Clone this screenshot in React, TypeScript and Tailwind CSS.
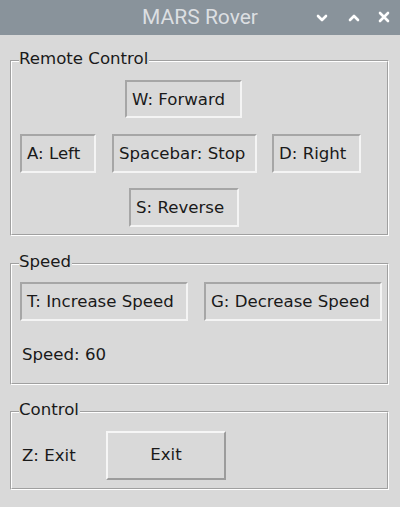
import React from "react";

const font = { fontFamily: '"DejaVu Sans", sans-serif' };

function Sunken({ w, h, ml, children }: { w: number; h: number; ml: number; children: React.ReactNode }) {
  return (
    <div
      className="flex items-center pl-[5px] border-2 border-t-[#a6a6a6] border-l-[#a6a6a6] border-b-[#f4f4f4] border-r-[#f4f4f4] text-[16.6px] text-[#1a1a1a] leading-[19px] whitespace-nowrap shrink-0"
      style={{ width: w, height: h, marginLeft: ml }}
    >
      {children}
    </div>
  );
}

function Frame({ label, h, mt, children }: { label: string; h: number; mt: number; children: React.ReactNode }) {
  return (
    <div
      className="relative border border-t-[#a0a0a0] border-l-[#a0a0a0] border-b-white border-r-white"
      style={{ height: h, marginTop: mt }}
    >
      <div className="absolute top-[-12px] left-[8px] bg-[#d9d9d9] pr-[1px] text-[16.6px] leading-[19px] text-[#1a1a1a] whitespace-nowrap z-10">
        {label}
      </div>
      <div className="h-full border border-t-white border-l-white border-b-[#a0a0a0] border-r-[#a0a0a0] flex flex-col">
        {children}
      </div>
    </div>
  );
}

export default function App() {
  return (
    <div className="w-[400px] h-[507px] bg-[#d9d9d9] flex flex-col overflow-hidden" style={font}>
      <div className="h-[35px] bg-[#89939b] relative flex items-center justify-center shrink-0">
        <span className="text-[21px] text-[#dcdfe2]" style={{ fontFamily: 'Roboto, "Open Sans", sans-serif' }}>
          MARS Rover
        </span>
        <div className="absolute right-0 top-0 h-[35px] flex items-center">
          <svg width="12" height="10" viewBox="0 0 12 10" className="absolute left-[-84px] top-[13px]">
            <path d="M2 3 L6 7 L10 3" stroke="#ffffff" strokeWidth="2.6" fill="none" strokeLinecap="round" strokeLinejoin="round" />
          </svg>
          <svg width="12" height="10" viewBox="0 0 12 10" className="absolute left-[-52px] top-[13px]">
            <path d="M2 7 L6 3 L10 7" stroke="#ffffff" strokeWidth="2.6" fill="none" strokeLinecap="round" strokeLinejoin="round" />
          </svg>
          <svg width="12" height="12" viewBox="0 0 12 12" className="absolute left-[-22px] top-[11px]">
            <path d="M2 2 L10 10 M10 2 L2 10" stroke="#ffffff" strokeWidth="2.6" fill="none" strokeLinecap="round" />
          </svg>
        </div>
      </div>

      <div className="pl-[10px] pr-[11px] flex flex-col">
        <Frame label="Remote Control" h={176} mt={25}>
          <div className="flex mt-[18px]">
            <Sunken w={117} h={38} ml={113}>W: Forward</Sunken>
          </div>
          <div className="flex mt-[16px]">
            <Sunken w={76} h={39} ml={8}>A: Left</Sunken>
            <Sunken w={145} h={39} ml={16}>Spacebar: Stop</Sunken>
            <Sunken w={89} h={39} ml={15}>D: Right</Sunken>
          </div>
          <div className="flex mt-[15px]">
            <Sunken w={110} h={39} ml={117}>S: Reverse</Sunken>
          </div>
        </Frame>

        <Frame label="Speed" h={122} mt={27}>
          <div className="flex mt-[17px]">
            <Sunken w={168} h={39} ml={8}>T: Increase Speed</Sunken>
            <Sunken w={178} h={39} ml={16}>G: Decrease Speed</Sunken>
          </div>
          <div className="ml-[10px] mt-[24px] text-[16.6px] leading-[19px] text-[#1a1a1a]">Speed: 60</div>
        </Frame>

        <Frame label="Control" h={79} mt={26}>
          <div className="flex items-center mt-[18px]">
            <div className="ml-[10px] w-[84px] text-[16.6px] leading-[19px] text-[#1a1a1a]">Z: Exit</div>
            <div className="w-[120px] h-[49px] flex items-center justify-center border-2 border-t-[#f6f6f6] border-l-[#f6f6f6] border-b-[#9c9c9c] border-r-[#9c9c9c] text-[16.6px] text-[#1a1a1a]">
              Exit
            </div>
          </div>
        </Frame>
      </div>
    </div>
  );
}
